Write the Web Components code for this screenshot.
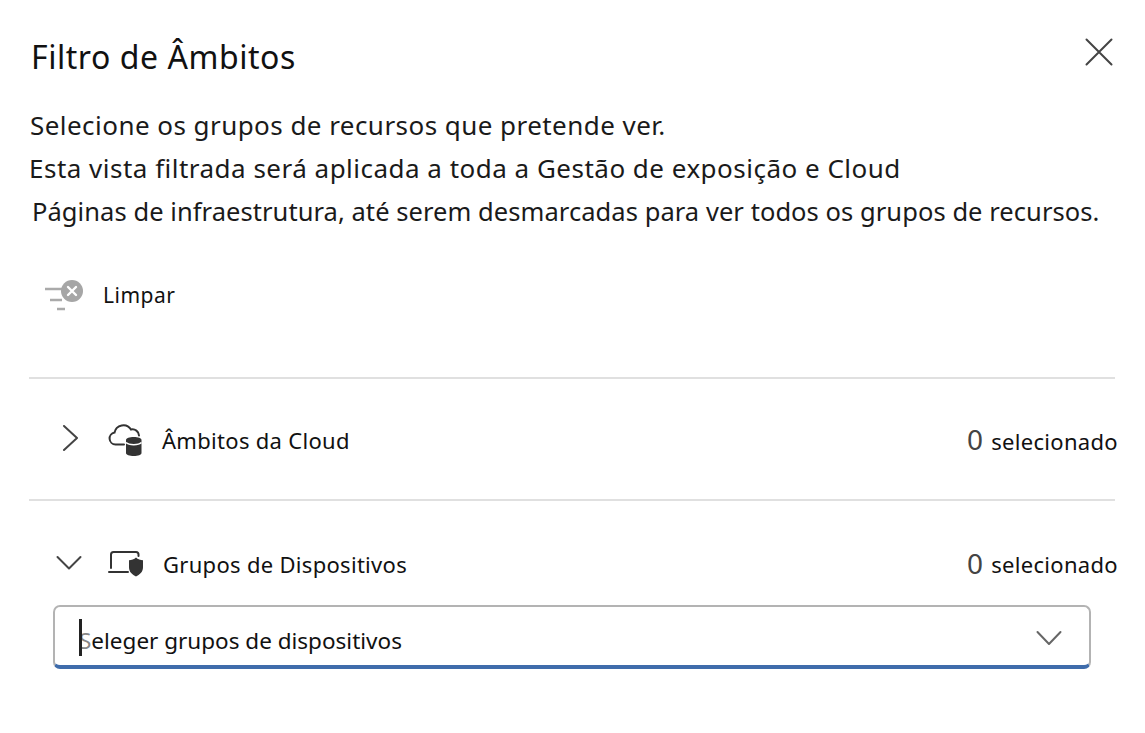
<!DOCTYPE html>
<html lang="pt">
<head>
<meta charset="utf-8">
<title>Filtro de Âmbitos</title>
<style>
html, body { margin: 0; background: #fff; }
body { font-family: "Noto Sans", "Open Sans", sans-serif; color: #111; width: 1145px; height: 733px; overflow: hidden; }
</style>
</head>
<body>
<scope-panel heading="Filtro de Âmbitos">
    <intro-line indent="1" size="26" spacing="0.45">Selecione os grupos de recursos que pretende ver.</intro-line>
    <intro-line indent="0" size="26" spacing="0.49">Esta vista filtrada será aplicada a toda a Gestão de exposição e Cloud</intro-line>
    <intro-line indent="3" size="25.5" spacing="0.06">Páginas de infraestrutura, até serem desmarcadas para ver todos os grupos de recursos.</intro-line>
    <clear-button>Limpar</clear-button>
    <scope-row label="Âmbitos da Cloud" icon="cloud"></scope-row>
    <scope-row label="Grupos de Dispositivos" icon="device" open>
        <group-select placeholder="eleger grupos de dispositivos"></group-select>
    </scope-row>
</scope-panel>

<script>
class ScopePanel extends HTMLElement {
    constructor() {
        super();
        this.shadowDom = this.attachShadow({ mode: 'open' });
        this.shadowDom.innerHTML = `
            <style>
                :host { display: block; padding: 0 30px 0 29px; }
                header { display: flex; justify-content: space-between; align-items: center; height: 114px; box-sizing: border-box; padding: 0 0 0 2px; margin-bottom: -10px; }
                h1 { margin: 0; font-size: 32px; font-weight: 400; line-height: 40px; letter-spacing: 0.55px; color: #111; }
                button { all: unset; display: block; width: 28px; height: 28px; position: relative; top: -5px; left: -2px; }
            </style>
            <header>
                <h1>${this.getAttribute('heading')}</h1>
                <button aria-label="Fechar">
                    <svg width="28" height="28" viewBox="0 0 28 28"><path d="M1.500 1.500 26.500 26.500M26.500 1.500 1.500 26.500" stroke="#444" stroke-width="2" stroke-linecap="round" fill="none"/></svg>
                </button>
            </header>
            <slot></slot>
        `;
    }
}

class IntroLine extends HTMLElement {
    constructor() {
        super();
        this.shadowDom = this.attachShadow({ mode: 'open' });
        this.shadowDom.innerHTML = `
            <style>
                :host { display: block; font-size: ${this.getAttribute('size')}px; line-height: 43px; letter-spacing: ${this.getAttribute('spacing')}px; white-space: nowrap; color: #1a1a1a; padding-left: ${this.getAttribute('indent') || 0}px; }
            </style>
            <slot></slot>
        `;
    }
}

class ClearButton extends HTMLElement {
    constructor() {
        super();
        this.shadowDom = this.attachShadow({ mode: 'open' });
        this.shadowDom.innerHTML = `
            <style>
                :host { display: flex; align-items: center; height: 60px; margin-top: 32px; padding: 0 0 52px 15px; gap: 19px; font-size: 21px; letter-spacing: 0.5px; color: #111; border-bottom: 2px solid #e0e0e0; }
                svg { display: block; }
            </style>
            <svg width="40" height="34" viewBox="0 0 40 34">
                <path d="M1 11H18M6 22H18M13 31H21" stroke="#aaa" stroke-width="2.400" fill="none"/>
                <circle cx="28" cy="13" r="11" fill="#a6a6a6"/>
                <path d="M24 9 32 17M32 9 24 17" stroke="#fff" stroke-width="2.400" stroke-linecap="round"/>
            </svg>
            <slot></slot>
        `;
    }
}

const ICONS = {
    cloud: `<svg width="36" height="36" viewBox="0 0 36 36">
        <path d="M17 22.500H8.500a6 6 0 0 1-1-11.900A9 9 0 0 1 24 7.500a6.500 6.500 0 0 1 8 6" fill="none" stroke="#333" stroke-width="2" stroke-linecap="round"/>
        <path d="M19 18c0-2 3.500-3 7.750-3s7.750 1 7.750 3v13c0 2-3.500 3-7.750 3s-7.750-1-7.750-3z" fill="#333"/>
        <path d="M19 20.500c1.500 1.500 4.500 2.200 7.750 2.200s6.250-.7 7.750-2.200" fill="none" stroke="#fff" stroke-width="1.600"/>
    </svg>`,
    device: `<svg width="36" height="36" viewBox="0 0 36 36" style="overflow:visible">
        <path d="M4 22V8.500A2.500 2.500 0 0 1 6.500 6H29A2.500 2.500 0 0 1 31.500 8.500V10M2 26H21" fill="none" stroke="#333" stroke-width="2" stroke-linecap="round"/>
        <path d="M29 11.500c1.800 1.800 4.500 2.800 7 2.800v7c0 5-3.500 7.500-7 9.200-3.500-1.700-7-4.200-7-9.200v-7c2.500 0 5.200-1 7-2.800z" fill="#333"/>
    </svg>`
};

class ScopeRow extends HTMLElement {
    constructor() {
        super();
        this.shadowDom = this.attachShadow({ mode: 'open' });
        const open = this.hasAttribute('open');
        const chevron = open
            ? '<path d="M3.500 8 15 19.500 26.500 8"/>'
            : '<path d="M10 1 23 13 10 25"/>';
        this.shadowDom.innerHTML = `
            <style>
                :host { display: block; }
                :host(:not([open])) { border-bottom: 2px solid #e0e0e0; }
                .row { display: flex; align-items: center; height: 120px; padding: 2px 0 0 25px; box-sizing: border-box; }
                :host([open]) .row { height: 126px; padding-top: 0; }
                .chev { width: 30px; height: 30px; flex: none; margin-right: 23px; }
                .icon { width: 36px; height: 36px; flex: none; margin-right: 19px; }
                .label { flex: 1; font-size: 22px; letter-spacing: 0.3px; color: #111; }
                .count { font-size: 28px; color: #444; margin: -3px 8px 0 0; }
                .unit { font-size: 22px; letter-spacing: 0.32px; color: #111; margin-right: -3px; }
                :host(:not([open])) .unit { padding-top: 2px; }
                :host([open]) .label { padding-left: 1px; }
                :host([open]) .body { margin-top: -22px; padding: 0 24px; }
            </style>
            <div class="row">
                <svg class="chev" viewBox="0 0 30 30" fill="none" stroke="#444" stroke-width="2" stroke-linecap="round" stroke-linejoin="round">${chevron}</svg>
                <span class="icon">${ICONS[this.getAttribute('icon')]}</span>
                <span class="label">${this.getAttribute('label')}</span>
                <span class="count">0</span><span class="unit">selecionado</span>
            </div>
            <div class="body"><slot></slot></div>
        `;
    }
}

class GroupSelect extends HTMLElement {
    constructor() {
        super();
        this.shadowDom = this.attachShadow({ mode: 'open' });
        this.shadowDom.innerHTML = `
            <style>
                :host { display: flex; align-items: center; height: 64px; box-sizing: border-box; border: 2px solid #b3b3b3; border-bottom: 4px solid #3f6cab; border-radius: 7px; padding: 0 27px 0 24px; font-size: 22.500px; letter-spacing: 0; color: #111; }
                .caret { width: 3px; height: 37px; margin-top: 2px; background: #222; margin-right: -3px; flex: none; position: relative; z-index: 1; }
                .ghost { color: #888; }
                .text { flex: 1; padding-top: 8px; }
                svg { display: block; flex: none; margin-top: 3px; }
            </style>
            <span class="caret"></span>
            <span class="text"><span class="ghost">S</span>${this.getAttribute('placeholder')}</span>
            <svg width="26" height="16" viewBox="0 0 26 16" fill="none" stroke="#666" stroke-width="2" stroke-linecap="round" stroke-linejoin="round"><path d="M1.500 2 13 14 24.500 2"/></svg>
        `;
    }
}

window.customElements.define('scope-panel', ScopePanel);
window.customElements.define('intro-line', IntroLine);
window.customElements.define('clear-button', ClearButton);
window.customElements.define('scope-row', ScopeRow);
window.customElements.define('group-select', GroupSelect);
</script>
</body>
</html>
